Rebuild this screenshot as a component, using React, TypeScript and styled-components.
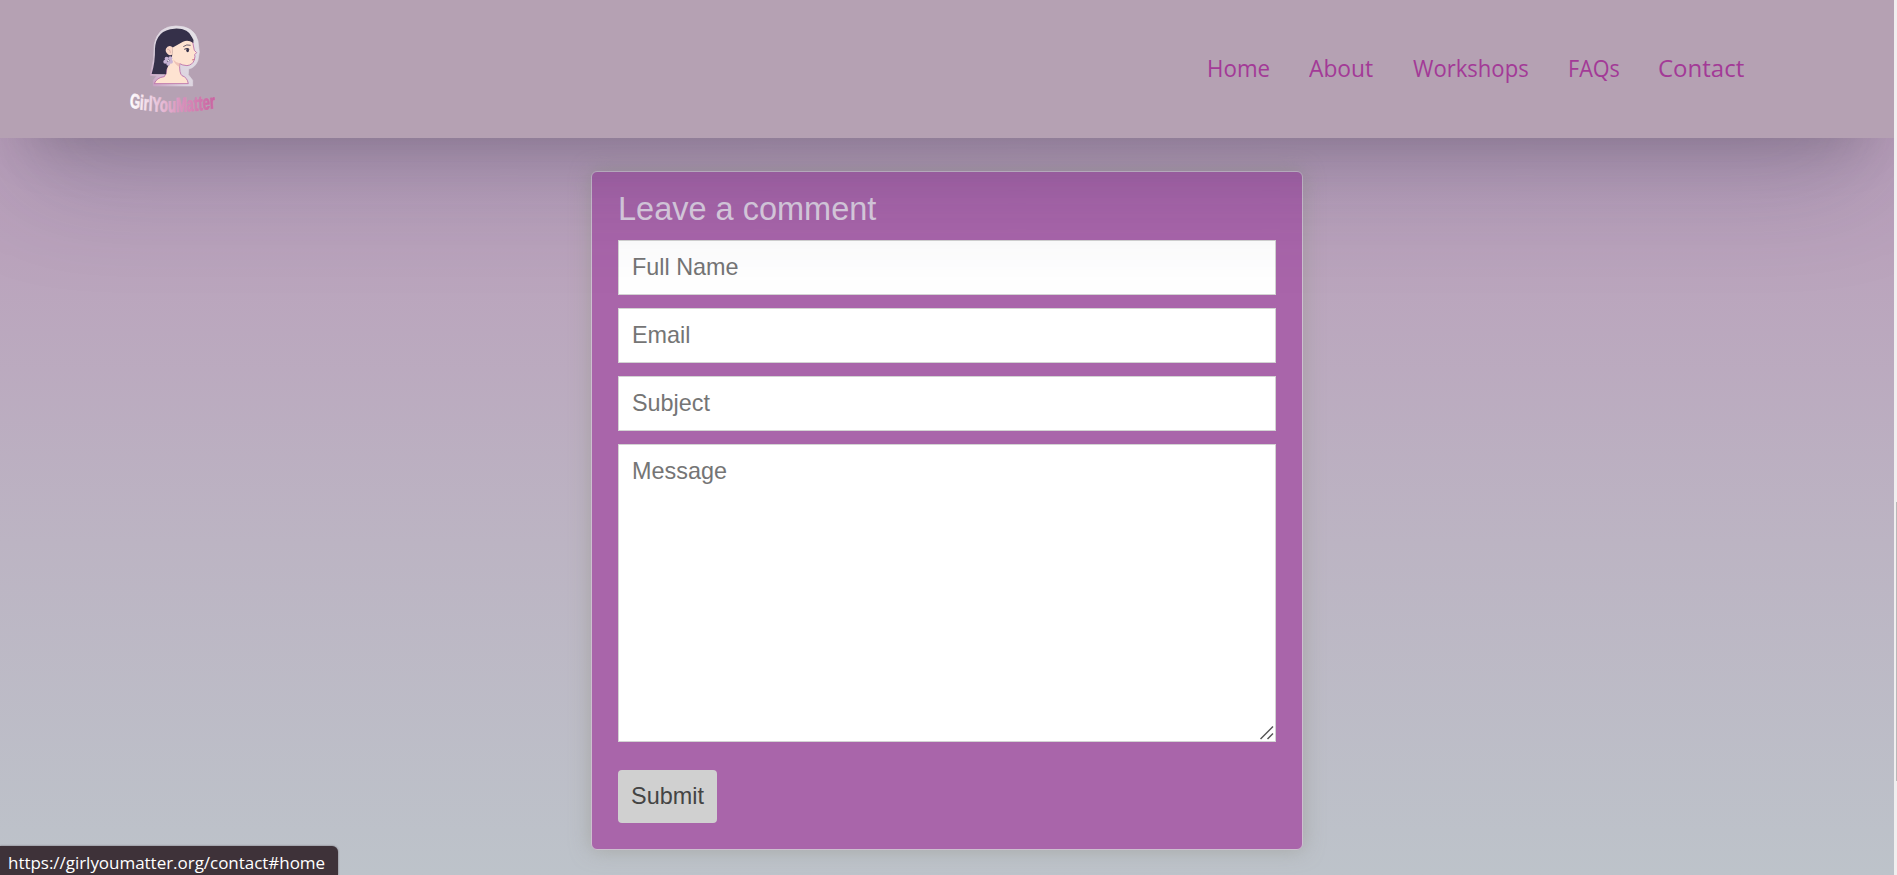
import React from "react";
import styled, { createGlobalStyle } from "styled-components";

const GlobalStyle = createGlobalStyle`
  * { box-sizing: border-box; }
  html, body { margin: 0; padding: 0; height: 100%; overflow: hidden; }
  body { font-family: "Liberation Sans", Arial, sans-serif; }
`;

const Window = styled.div`
  display: flex;
  width: 1897px;
  height: 875px;
  overflow: hidden;
  position: relative;
`;

const Page = styled.div`
  flex: 1;
  display: flex;
  flex-direction: column;
  overflow: hidden;
  background: linear-gradient(180deg, #b89bb9 0%, #baa3bc 28%, #bcb4c3 62%, #bdc3ca 100%);
`;

const ScrollTrack = styled.div`
  width: 3px;
  padding: 502px 0 0 2px;
  background: #f0efef;
`;

const ScrollThumb = styled.div`
  height: 279px;
  background: #b9b9b9;
`;

const Header = styled.header`
  position: relative;
  z-index: 2;
  height: 138px;
  flex: none;
  display: flex;
  align-items: center;
  justify-content: space-between;
  padding: 0 150px 0 127px;
  background: #b5a1b3;
  box-shadow: rgba(50, 50, 93, 0.27) 0 60px 115px -25px,
    rgba(0, 0, 0, 0.24) 0 30px 60px -30px;
`;

const LogoArt = styled.svg`
  width: 92px;
  height: 96px;
  display: block;
  overflow: visible;
`;

const Nav = styled.nav`
  display: flex;
  gap: 39px;
  padding-bottom: 2px;
`;

const NavLink = styled.a<{ $width: number; $stretch: number }>`
  width: ${(p) => p.$width}px;
  transform: scaleX(${(p) => p.$stretch});
  transform-origin: left center;
  font-family: "Trebuchet MS", "Open Sans", sans-serif;
  font-size: 24px;
  line-height: 30px;
  white-space: nowrap;
  color: #a33a97;
  text-decoration: none;
`;

const Main = styled.main`
  display: flex;
  justify-content: center;
  padding-top: 33px;
`;

const Card = styled.form`
  display: flex;
  flex-direction: column;
  align-items: flex-start;
  width: 712px;
  height: 679px;
  padding: 17px 26px 25px;
  background: #a965aa;
  border: 1px solid #cdbfcf;
  border-radius: 6px;
  box-shadow: 0 0 20px rgba(150, 150, 140, 0.6);
`;

const Title = styled.h2`
  margin: 0 0 11px;
  font-size: 32.5px;
  font-weight: 400;
  line-height: 40px;
  color: #dccfe0;
`;

const Field = styled.input`
  display: block;
  width: 658px;
  height: 55px;
  margin: 0 0 13px;
  padding: 0 13px;
  border: 1px solid #d3d3d3;
  border-radius: 0;
  background: #fff;
  font: 23.4px "Liberation Sans", Arial, sans-serif;
  &::placeholder { color: #757575; }
`;

const MessageBox = styled.div`
  position: relative;
  margin-bottom: 28px;
`;

const Message = styled.textarea`
  display: block;
  width: 658px;
  height: 298px;
  margin: 0;
  padding: 13px;
  border: 1px solid #d3d3d3;
  border-radius: 0;
  background: #fff;
  font: 23.4px "Liberation Sans", Arial, sans-serif;
  resize: none;
  &::placeholder { color: #757575; }
`;

const Grip = styled.svg`
  position: absolute;
  right: 2px;
  bottom: 2px;
  width: 14px;
  height: 14px;
`;

const Submit = styled.button`
  width: 99px;
  height: 53px;
  padding: 0;
  border: 0;
  border-radius: 4px;
  background: #d0d0d0;
  color: #444;
  font: 23.4px "Liberation Sans", Arial, sans-serif;
`;

const StatusBar = styled.div`
  position: absolute;
  z-index: 3;
  left: 0;
  bottom: 0;
  width: 338px;
  height: 29px;
  padding-left: 8px;
  border-top-right-radius: 6px;
  background: #3e3239;
  color: #fff;
  font: 17px/33px "Segoe UI", "Open Sans", sans-serif;
  letter-spacing: -0.03px;
  white-space: nowrap;
  box-shadow: 0 0 2px rgba(60, 50, 60, 0.7);
`;

const links = [
  { label: "Home", width: 63, stretch: 0.93 },
  { label: "About", width: 65, stretch: 0.95 },
  { label: "Workshops", width: 116, stretch: 0.92 },
  { label: "FAQs", width: 51, stretch: 0.9 },
  { label: "Contact", width: 86, stretch: 1 },
];

function Logo() {
  return (
    <LogoArt viewBox="127 21 92 96" role="img" aria-label="GirlYouMatter">
      <defs>
        <linearGradient id="word" gradientUnits="userSpaceOnUse" x1="0" y1="0" x2="134" y2="0">
          <stop offset="0" stopColor="#fff" />
          <stop offset="0.3" stopColor="#eac9dd" />
          <stop offset="0.6" stopColor="#d990bc" />
          <stop offset="1" stopColor="#c9609f" />
        </linearGradient>
        <linearGradient id="halo" x1="0" y1="1" x2="1" y2="0">
          <stop offset="0" stopColor="#c79bc0" />
          <stop offset="0.35" stopColor="#dcd3df" />
          <stop offset="1" stopColor="#e6e3e8" />
        </linearGradient>
        <path id="bow" d="M0 107Q66 117.500 150 106" />
      </defs>
      <g transform="translate(144.300 20.300) scale(.3333)">
        <path d="M18 165L28 115L30 72Q40 18 95 17Q150 17 161 62L165 95L161 120Q153 142 133 146L132 163L145 180V197H27V180L37 167Z" fill="url(#halo)" stroke="url(#halo)" strokeWidth="2" strokeLinejoin="round" />
        <path d="M30 190Q37 172 60 169Q68 160 68 140L72 82L110 50L145 64L150 90L157 97L151 103L152 109L150 119Q145 134 128 136Q114 135 106 130Q105 160 113 166Q129 171 132 190Z" fill="#fee3d1" stroke="#b86aa7" strokeWidth="2.5" strokeLinejoin="round" />
        <path d="M106 129Q95 128 86 117Q92 133 105 140Z" fill="#efc3b6" />
        <path d="M22 161Q33 125 32 86Q35 28 91 25Q132 23 143 51Q149 57 147 68Q132 57 116 64L84 82Q88 110 72 137Q64 148 66 162Z" fill="#353049" />
        <path d="M85 102Q77 108 70 101Q62 94 65 85Q72 72 85 81Z" fill="#fbd7c7" />
        <path d="M69 87Q78 86 78 98" fill="none" stroke="#cc9b9c" strokeWidth="2" />
        <g fill="#c9b4d5">
          <circle cx="67" cy="115" r="6" /><circle cx="78" cy="114" r="6" />
          <circle cx="80" cy="124" r="6" /><circle cx="72" cy="130" r="6" />
          <circle cx="63" cy="124" r="6" />
        </g>
        <circle cx="72" cy="121" r="3" fill="#eee3ef" />
        <path d="M117 79Q127 71 139 75" fill="none" stroke="#4b4055" strokeWidth="2.5" />
        <path d="M120 87Q128 82 135 87" fill="none" stroke="#353049" strokeWidth="3" />
        <ellipse cx="130" cy="90" rx="4" ry="6" fill="#353049" />
        <path d="M143 119L151 117" stroke="#cc6d83" strokeWidth="2.5" />
      </g>
      <g transform="translate(129.500 0) scale(.65 1)">
        <text fontFamily="'Liberation Sans', Arial, sans-serif" fontWeight="700" fontStyle="normal" fontSize="20.300" fill="url(#word)" stroke="url(#word)" strokeWidth="0.7">
          <textPath href="#bow">GirlYouMatter</textPath>
        </text>
      </g>
    </LogoArt>
  );
}

export default function App() {
  return (
    <Window>
      <GlobalStyle />
      <Page>
        <Header>
          <Logo />
          <Nav>
            {links.map((l) => (
              <NavLink key={l.label} $width={l.width} $stretch={l.stretch}>{l.label}</NavLink>
            ))}
          </Nav>
        </Header>
        <Main>
          <Card>
            <Title>Leave a comment</Title>
            <Field placeholder="Full Name" />
            <Field placeholder="Email" />
            <Field placeholder="Subject" />
            <MessageBox>
              <Message placeholder="Message" />
              <Grip viewBox="0 0 14 14" fill="none" stroke="#555" strokeWidth="1.5">
                <path d="M0.5 13L13 0.5M7.5 13L13 7.5" />
              </Grip>
            </MessageBox>
            <Submit type="button">Submit</Submit>
          </Card>
        </Main>
      </Page>
      <ScrollTrack><ScrollThumb /></ScrollTrack>
      <StatusBar>https://girlyoumatter.org/contact#home</StatusBar>
    </Window>
  );
}
